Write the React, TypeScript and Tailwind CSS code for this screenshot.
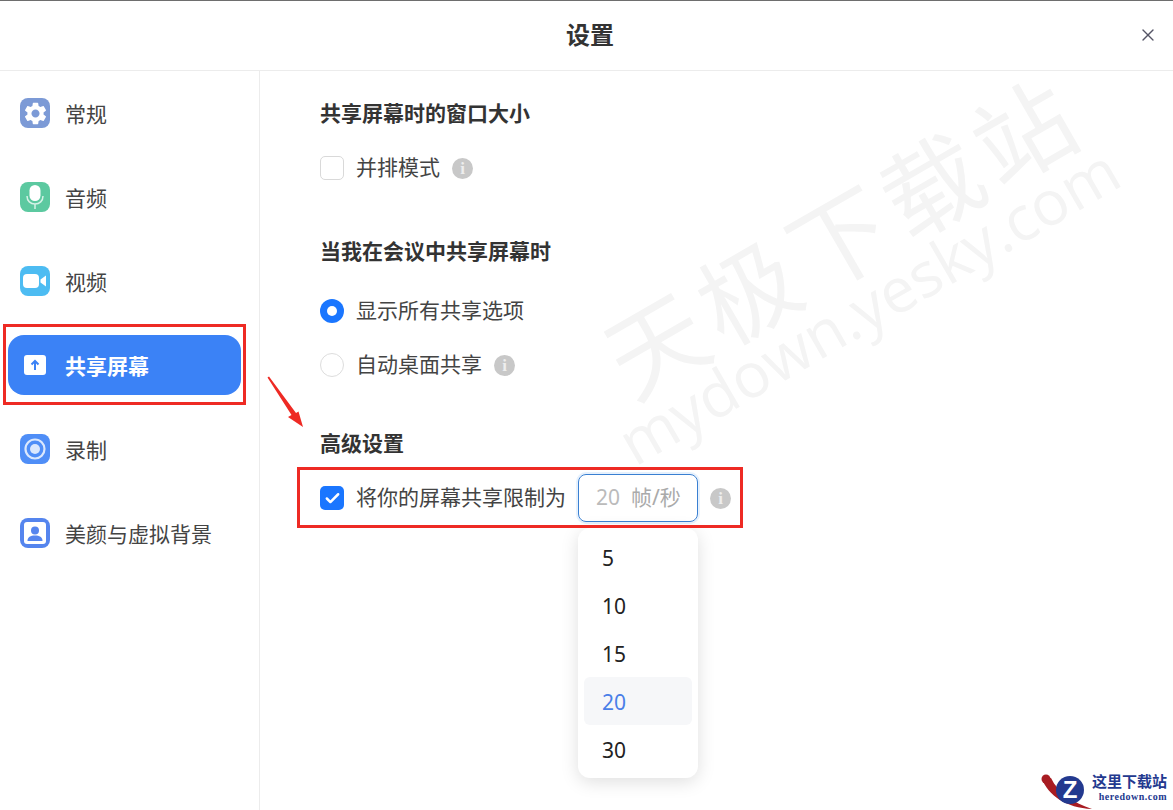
import { Check, X } from 'lucide-react';
import { MdSettings } from 'react-icons/md';
import type { ReactNode } from 'react';

const FONT = 'font-["Noto_Sans","Noto_Sans_CJK_SC",sans-serif]';

function Tile({ color, children }: { color: string; children: ReactNode }) {
  return (
    <span className={`flex h-[30px] w-[30px] shrink-0 items-center justify-center rounded-[8px] ${color}`}>
      {children}
    </span>
  );
}

const navItems: { label: string; active?: boolean; icon: ReactNode }[] = [
  {
    label: '常规',
    icon: (
      <Tile color="bg-[#7c9ad6]">
        <MdSettings size={27} color="#fff" />
      </Tile>
    ),
  },
  {
    label: '音频',
    icon: (
      <Tile color="bg-[#5cc9a0]">
        <svg width="22" height="26" viewBox="0 0 22 26">
          <rect x="5.500" y="1" width="11" height="16" rx="5.500" fill="#fff" />
          <path d="M3 12c0 5 3.500 8 8 8s8-3 8-8M11 20v5" fill="none" stroke="#fff" strokeOpacity="0.75" strokeWidth="1.500" />
        </svg>
      </Tile>
    ),
  },
  {
    label: '视频',
    icon: (
      <Tile color="bg-[#4dbcf2]">
        <svg width="26" height="18" viewBox="0 0 26 18">
          <rect x="1" y="2" width="16" height="14" rx="4" fill="#fff" />
          <path d="M18.500 7.500 24 3.500v11l-5.500-4z" fill="#fff" />
        </svg>
      </Tile>
    ),
  },
  {
    label: '共享屏幕',
    active: true,
    icon: (
      <span className="flex h-[30px] w-[30px] shrink-0 items-center justify-center">
        <svg width="22" height="20" viewBox="0 0 22 20">
          <rect width="22" height="20" rx="3" fill="#fff" />
          <path d="M11 15V6M7.500 9.500 11 6l3.500 3.500" fill="none" stroke="#3b82f6" strokeWidth="2" />
        </svg>
      </span>
    ),
  },
  {
    label: '录制',
    icon: (
      <Tile color="bg-[#4f8ef7]">
        <svg width="24" height="24" viewBox="0 0 24 24">
          <circle cx="12" cy="12" r="9.500" fill="none" stroke="#dbe8fd" strokeWidth="2.200" />
          <circle cx="12" cy="12" r="5" fill="#dbe8fd" />
        </svg>
      </Tile>
    ),
  },
  {
    label: '美颜与虚拟背景',
    icon: (
      <Tile color="bg-[#5585ee]">
        <svg width="22" height="22" viewBox="0 0 22 22">
          <rect width="22" height="22" rx="3" fill="#fff" />
          <circle cx="11" cy="8.500" r="4" fill="#5585ee" />
          <path d="M3.500 19c0-4 3-5.500 7.500-5.500s7.500 1.500 7.500 5.500z" fill="#5585ee" />
        </svg>
      </Tile>
    ),
  },
];

function Info() {
  return (
    <span className="flex h-[21px] w-[21px] shrink-0 items-center justify-center rounded-full bg-[#c8c8c8] font-['Liberation_Serif',serif] text-[17px] font-bold leading-none text-[#eeeeee]">
      i
    </span>
  );
}

function Heading({ children, className }: { children: ReactNode; className: string }) {
  return <h2 className={`text-[21px] leading-[28px] font-bold text-[#333333] ${className}`}>{children}</h2>;
}

function Row({ control, label, info, className }: { control: ReactNode; label: string; info?: boolean; className: string }) {
  return (
    <div className={`flex h-[28px] items-center ${className}`}>
      {control}
      <span className="ml-3 text-[21px] text-[#444444]">{label}</span>
      {info && <span className="ml-3"><Info /></span>}
    </div>
  );
}

const Box = () => <span className="h-6 w-6 rounded-[5px] border border-[#d9d9d9] bg-white" />;
const Radio = ({ on }: { on?: boolean }) =>
  on ? (
    <span className="flex h-6 w-6 items-center justify-center rounded-full bg-[#1a76ff]">
      <span className="h-[10px] w-[10px] rounded-full bg-white" />
    </span>
  ) : (
    <span className="h-6 w-6 rounded-full border border-[#dddddd] bg-white" />
  );

export default function App() {
  return (
    <div className={`relative h-[810px] w-[1173px] overflow-hidden bg-white ${FONT}`}>
      <header className="relative flex h-[71px] items-center justify-center border-t border-b border-t-[#6e6e6e] border-b-[#ececec] pb-[2px] pl-[7px]">
        <h1 className="text-[24px] font-bold text-[#333333]">设置</h1>
        <X size={20} strokeWidth={1.6} className="absolute right-[15px] top-[24px] text-[#555566]" />
      </header>

      <div className="flex h-[739px]">
        <nav className="flex w-[260px] shrink-0 flex-col gap-6 border-r border-[#ececec] pt-3 pl-2 pr-[18px]">
          {navItems.map((item) => (
            <div
              key={item.label}
              className={`flex h-[60px] items-center gap-[15px] rounded-[16px] pl-3 text-[21px] ${
                item.active ? 'bg-[#3b82f6] font-bold text-white' : 'text-[#444444]'
              }`}
            >
              {item.icon}
              <span className="mt-1">{item.label}</span>
            </div>
          ))}
        </nav>

        <main className="relative flex-1 pl-[60px]">
          <Heading className="mt-[28px]">共享屏幕时的窗口大小</Heading>
          <Row className="mt-[27px]" control={<Box />} label="并排模式" info />
          <Heading className="mt-[55px]">当我在会议中共享屏幕时</Heading>
          <Row className="mt-[32px]" control={<Radio on />} label="显示所有共享选项" />
          <Row className="mt-[26px]" control={<Radio />} label="自动桌面共享" info />
          <Heading className="mt-[50px]">高级设置</Heading>
          <div className="mt-[17px] flex h-[48px] items-center">
            <span className="flex h-6 w-6 items-center justify-center rounded-[5px] bg-[#1a76ff]">
              <Check size={17} strokeWidth={3.5} className="text-white" />
            </span>
            <span className="ml-3 text-[21px] text-[#444444]">将你的屏幕共享限制为</span>
            <div className="ml-3 flex h-[48px] w-[120px] items-center rounded-[8px] border border-[#3a80d2] pl-[17px] text-[21px] text-[#bbbbbb] shadow-[0_0_0_2px_#e6f1fd]">
              20
              <span className="ml-[11px] text-[#aaaaaa]">帧/秒</span>
            </div>
            <span className="ml-3"><Info /></span>
          </div>
        </main>
      </div>

      {/* watermark */}
      <div className="pointer-events-none absolute left-[578px] top-[187px] origin-center -rotate-[30deg] text-[98px] leading-none font-normal tracking-[8px] whitespace-nowrap text-[#f4f4f4]">
        天极下载站
      </div>
      <div className="pointer-events-none absolute left-[585px] top-[274px] origin-center -rotate-[30deg] font-['Open_Sans',sans-serif] text-[62px] leading-none font-normal whitespace-nowrap text-[#f4f4f4]">
        mydown.yesky.com
      </div>

      {/* dropdown */}
      <ul className="absolute left-[578px] top-[528px] flex h-[250px] w-[120px] flex-col rounded-[12px] bg-white px-[6px] pt-[5px] text-[21px] text-[#222222] shadow-[0_4px_18px_rgba(0,0,0,0.13)]">
        {['5', '10', '15', '20', '30'].map((n) => (
          <li
            key={n}
            className={`flex h-[48px] items-center rounded-[6px] pl-[18px] ${n === '20' ? 'bg-[#f6f7f9] text-[#4a7fe8]' : ''}`}
          >
            <span className="mt-1">{n}</span>
          </li>
        ))}
      </ul>

      {/* red annotations */}
      <div className="absolute left-[3px] top-[324px] h-[81px] w-[243px] border-[3px] border-[#ee2a24]" />
      <div className="absolute left-[297px] top-[467px] h-[61px] w-[446px] border-[3px] border-[#ee2a24]" />
      <svg className="absolute left-[264px] top-[372px]" width="44" height="58" viewBox="0 0 44 58">
        <path d="M3.500 5.500 5 4.500 32 41 34.500 39.500 39 55 24 45 27.500 43z" fill="#ee2a24" />
      </svg>

      {/* site logo */}
      <div className="absolute left-[1040px] top-[773px] flex items-start">
        <svg width="54" height="37" viewBox="0 0 54 37">
          <path d="M2 6C8 22 26 35 52 36 34 30 18 20 11 5z" fill="#a81c22" />
          <circle cx="6" cy="6" r="4.500" fill="#a81c22" />
          <circle cx="30" cy="17" r="14" fill="#23398f" />
          <text x="30" y="25" textAnchor="middle" fontSize="24" fontWeight="700" fill="#fff" fontFamily="Liberation Sans, sans-serif">Z</text>
        </svg>
        <div className="ml-[-2px] flex flex-col items-end font-['Liberation_Serif','Noto_Sans_CJK_SC',serif] font-bold text-[#23398f]">
          <span className="text-[15px] leading-[18px]">这里下载站</span>
          <span className="text-[10px] leading-[12px] tracking-[0.5px]">heredown.com</span>
        </div>
      </div>
    </div>
  );
}
